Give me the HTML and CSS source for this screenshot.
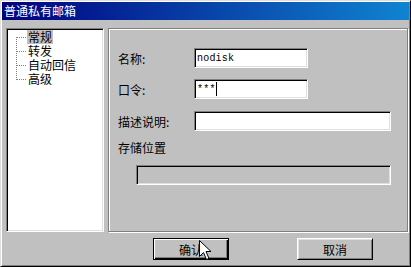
FILE: index.html
```html
<!DOCTYPE html>
<html lang="zh-CN">
<head>
    <meta charset="UTF-8" />
    <title>普通私有邮箱</title>
    <link rel="stylesheet" href="styles.css">
</head>
<body>

    <div class="dialog">
        <!-- 标题栏 -->
        <div class="titlebar">普通私有邮箱</div>

        <div class="content">
            <!-- 左侧树 -->
            <div class="tree">
                <ul>
                    <li><span class="selected">常规</span></li>
                    <li><span>转发</span></li>
                    <li><span>自动回信</span></li>
                    <li><span>高级</span></li>
                </ul>
            </div>

            <!-- 右侧属性页 -->
            <div class="page">
                <div class="row row-1">
                    <span class="label">名称:</span>
                    <div class="field field-short mono">nodisk</div>
                </div>
                <div class="row row-2">
                    <span class="label">口令:</span>
                    <div class="field field-short mono">***<span class="caret"></span></div>
                </div>
                <div class="row row-3">
                    <span class="label">描述说明:</span>
                    <div class="field field-long"></div>
                </div>
                <div class="group-label">存储位置</div>
                <div class="field field-store"></div>
            </div>
        </div>

        <!-- 按钮 -->
        <div class="buttons">
            <button class="btn btn-default">确认</button>
            <button class="btn">取消</button>
        </div>

        <!-- 鼠标指针 -->
        <svg class="cursor" width="14" height="22" viewBox="0 0 14 22">
            <polygon points="0.5,0.5 0.5,16.5 4.5,12.5 7.5,19.5 10,18.5 7,11.5 12,11.5" fill="#fff" stroke="#000" stroke-width="1" stroke-linejoin="miter"/>
        </svg>
    </div>

</body>
</html>
```

FILE: styles.css
```css
* {
    margin: 0;
    padding: 0;
    box-sizing: border-box;
}

body {
    font-family: "Noto Sans CJK SC", "DejaVu Sans", sans-serif;
    font-size: 12px;
    background-color: #c0c0c0;
    color: #000;
}

.dialog {
    position: relative;
    width: 411px;
    height: 267px;
    padding: 1px;
    background-color: #c0c0c0;
    border-top: 1px solid #dfdfdf;
    border-left: 1px solid #dfdfdf;
    border-right: 1px solid #000;
    border-bottom: 1px solid #000;
    box-shadow: inset 1px 1px #fff, inset -1px -1px #808080;
}

.titlebar {
    height: 18px;
    line-height: 18px;
    padding-left: 2px;
    color: #fff;
    font-size: 12px;
    background: linear-gradient(to right, #000080, #1084d0);
}

.content {
    display: flex;
    gap: 4px;
    margin-top: 8px;
    margin-left: 4px;
    height: 204px;
}

/* 树形列表 */
.tree {
    width: 98px;
    background-color: #fff;
    border-top: 1px solid #808080;
    border-left: 1px solid #808080;
    border-right: 1px solid #fff;
    border-bottom: 1px solid #fff;
    box-shadow: inset 1px 1px #000, inset -1px -1px #dfdfdf;
    padding: 1px 0 0 9px;
}

.tree ul {
    position: relative;
    list-style: none;
}

.tree ul::before {
    content: "";
    position: absolute;
    left: 0;
    top: 7px;
    bottom: 6px;
    border-left: 1px dotted #808080;
}

.tree li {
    position: relative;
    height: 14px;
    line-height: 14px;
    padding-left: 11px;
}

.tree li::before {
    content: "";
    position: absolute;
    left: 1px;
    top: 7px;
    width: 9px;
    border-top: 1px dotted #808080;
}

.tree li span {
    display: inline-block;
    height: 14px;
    line-height: 14px;
    padding: 0 1px;
    vertical-align: top;
}

.tree li .selected {
    background-color: #c0c0c0;
}

/* 属性页 */
.page {
    width: 300px;
    border: 1px solid #808080;
    box-shadow: inset 1px 1px #fff, 1px 1px #fff;
    padding: 19px 0 0 9px;
}

.row {
    display: flex;
    align-items: center;
    height: 20px;
}

.row-1 { margin-bottom: 11px; }
.row-2 { margin-bottom: 12px; }
.row-3 { margin-bottom: 10px; }

.label {
    width: 76px;
}

.field {
    height: 20px;
    background-color: #fff;
    border-top: 1px solid #808080;
    border-left: 1px solid #808080;
    border-right: 1px solid #fff;
    border-bottom: 1px solid #fff;
    box-shadow: inset 1px 1px #000, inset -1px -1px #dfdfdf;
    padding-left: 2px;
    display: flex;
    align-items: center;
}

.mono {
    font-family: "Liberation Mono", monospace;
    font-size: 10px;
    letter-spacing: 0.2px;
}

.caret {
    display: inline-block;
    width: 1px;
    height: 14px;
    background-color: #000;
}

.field-short { width: 114px; }
.field-long { width: 197px; }

.group-label {
    height: 14px;
    line-height: 14px;
    margin-bottom: 10px;
}

.field-store {
    width: 255px;
    margin-left: 18px;
    background-color: #c0c0c0;
}

/* 按钮 */
.buttons {
    display: flex;
    gap: 68px;
    margin-top: 6px;
    margin-left: 151px;
}

.btn {
    width: 76px;
    height: 22px;
    font-family: "Noto Sans CJK SC", sans-serif;
    font-size: 12px;
    color: #000;
    background-color: #c0c0c0;
    border-top: 1px solid #fff;
    border-left: 1px solid #fff;
    border-right: 1px solid #000;
    border-bottom: 1px solid #000;
    box-shadow: inset 1px 1px #dfdfdf, inset -1px -1px #808080;
}

.btn-default {
    border: 1px solid #000;
    box-shadow: inset 1px 1px #fff, inset -1px -1px #000, inset -2px -2px #808080;
}

.cursor {
    position: absolute;
    left: 198px;
    top: 239px;
}
```
